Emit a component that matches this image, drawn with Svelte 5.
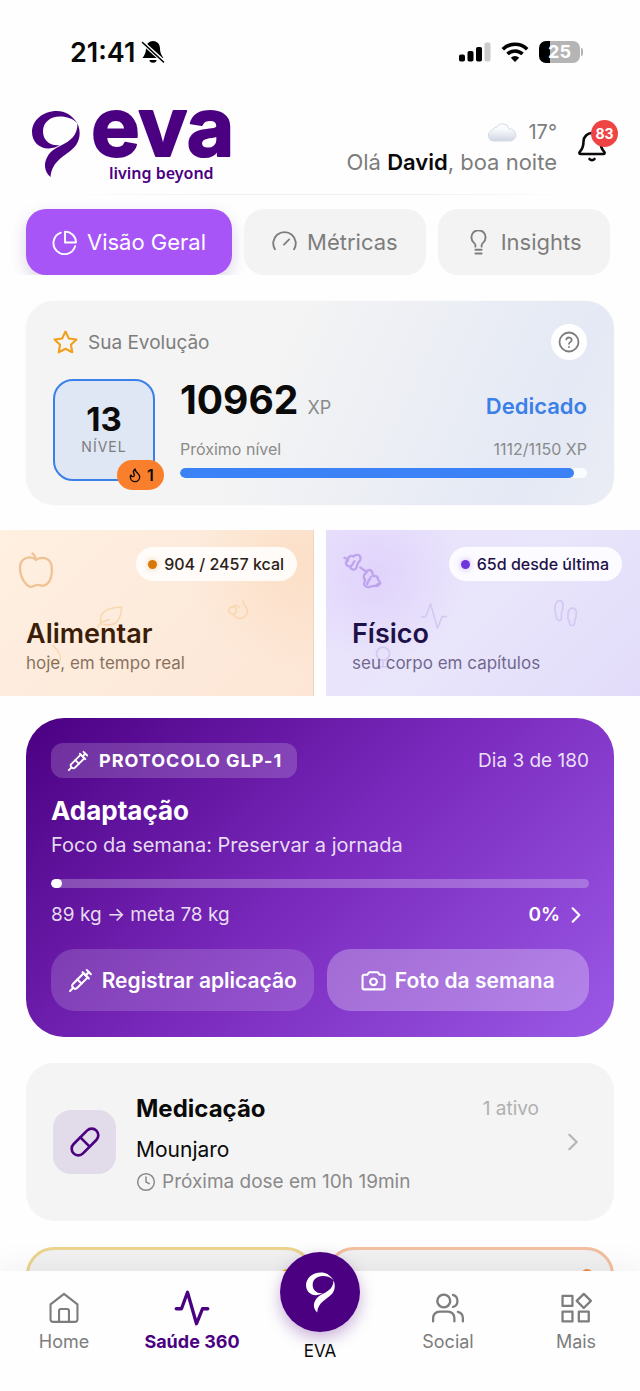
<script lang="ts">
  type Tab = { id: string; label: string; icon: string }

  const icons: Record<string, string[]> = {
    pie: ['M12.5 1.5v10.5H23A10.5 10.5 0 0 0 12.5 1.5z', 'M8.5 2.6A10.6 10.6 0 1 0 22.2 15.6'],
    gauge: ['M2.800 18.500a10.800 10.800 0 1 1 18.400 0', 'M11.5 14l5-5'],
    bulb: [
      'M9 16v-1.400c0-1-.6-1.700-1.500-2.500a6.800 6.800 0 1 1 9 0c-.9.800-1.500 1.500-1.500 2.500V16',
      'M9 19h6',
      'M9 22.500h6',
    ],
    star: [
      'M12 1.500l3.200 6.600 7.300 1-5.300 5.100 1.300 7.200L12 18l-6.500 3.400 1.300-7.200L1.500 9.100l7.300-1z',
    ],
    help: [
      'M12 2.500a9.500 9.500 0 1 0 0 19 9.500 9.500 0 0 0 0-19z',
      'M9.300 9.300a2.800 2.800 0 0 1 5.400.9c0 1.800-2.700 2-2.700 3.600',
      'M12 17h.01',
    ],
    flame: [
      'M8.500 14.500A2.500 2.500 0 0 0 11 12c0-1.380-.5-2-1-3-1.072-2.143-.224-4.054 2-6 .5 2.500 2 4.900 4 6.500 2 1.600 3 3.500 3 5.500a7 7 0 1 1-14 0c0-1.153.433-2.294 1-3a2.500 2.500 0 0 0 2.500 2.500z',
    ],
    apple: [
      'M12 6.200c-2-1.700-4.500-1.600-6.500-.6C3 7 2.500 10 3 13c.6 3.800 3 7.500 5.500 8.500 1.400.5 2.300-.7 3.700-.9 1.800-.3 3 .8 4.600.2 2.400-.9 3.900-3.700 4.200-7 .3-3.300.2-6.600-2.400-8-2-1-4.700-.9-6.600.4z',
      'M12 6c-.2-1.500-.8-2.600-2-3.500',
    ],
    dumbbell: [
      'M2 5l2 1M20.500 20.500l2-1M11 10.500l3.500 2.500',
      'M4 6.500c-.3-2 1.600-3.200 3.200-2.200 1.200-1.700 3.900-1 4 1 .1 1.400-1 2-1.600 2.900-.6 1.100-.3 2.300-1.300 3.200-1.300 1-3 .1-3-1.500C3 10 1.800 7.600 4 6.500z',
      'M5.500 10c1.200-.6 1.200-2 2.200-3',
      'M14.300 13.800c.1-1.900 2.500-2.400 3.400-.9.500.8.2 1.800.7 2.600 1.500-.6 3 .5 2.700 2 1.600.9 1.300 3.300-.5 3.600-1.100.2-1.900-.3-3 .2-1.600.8-3.900.6-4.300-1-.3-1.200.4-1.900.5-2.900-1.300-.8-1-3 .5-3.600z',
      'M15 20c.2-1.600 1.500-2.500 2-4',
    ],
    leaf: ['M3 20c1-3 3.500-4.500 9-6', 'M6 18C3 9 9 4.500 22 4c0 9-4 16-14 14'],
    cherry: ['M7 8a3.500 3.500 0 1 0 .1 0', 'M17 3c-.5 2 .500 3.500 2 5a7 6.500 0 1 1-11 8', 'M8 8c2-2 4-1 5 1'],
    drop: ['M10 2c5 5 8 9 8 13a6 6 0 0 1-12 0'],
    pulse: ['M1.500 12.500H5l4-11 6 21 4-10h3.500'],
    steps: [
      'M3.500 15C1 9 2.500 2 6 2s3.500 6 1.500 10.500V17c-1 1.500-4 1-4-2z',
      'M14 20c-2.500-5-1.500-12 2.500-12s3.500 6 1.500 11v2c-1 1.500-4 1.500-4-1z',
    ],
    ring: ['M12 3a6 6 0 1 0 .1 0', 'M12 15v6M8 21h8'],
    syringe: [
      'm18 2 4 4',
      'm17 7 3-3',
      'M19 9 8.700 19.300c-1 1-2.500 1-3.400 0l-.6-.6c-1-1-1-2.500 0-3.400L15 5z',
      'm9 11 4 4',
      'm5 19-3 3',
      'm14 4 6 6',
    ],
    camera: [
      'M8 4h8l2 2.500h3A1.500 1.500 0 0 1 22.500 8v11a1.500 1.500 0 0 1-1.500 1.500H3A1.500 1.500 0 0 1 1.500 19V8A1.500 1.500 0 0 1 3 6.500h3z',
      'M12 10a3.200 3.200 0 1 0 .01 0z',
    ],
    chevron: ['M8 4l8 8-8 8'],
    pill: [
      'm10.500 20.500 10-10a4.950 4.950 0 1 0-7-7l-10 10a4.950 4.950 0 1 0 7 7z',
      'm8.500 8.500 7 7',
    ],
    clock: ['M12 2a10 10 0 1 0 0 20 10 10 0 0 0 0-20z', 'M12 6v6l4 2'],
    home: [
      'M2.500 9.500 12 2l9.500 7.500V20a1.800 1.800 0 0 1-1.800 1.800H4.300A1.800 1.800 0 0 1 2.500 20z',
      'M8.500 21.500V14a1.300 1.300 0 0 1 1.300-1.300h4.400a1.300 1.300 0 0 1 1.300 1.300v7.500',
    ],
    users: [
      'M9 2.500a4.500 4.500 0 1 0 .01 0z',
      'M1.500 21.500V19a4.500 4.500 0 0 1 4.500-4.500h6a4.500 4.500 0 0 1 4.500 4.500v2.500',
      'M15.500 2.700a4.500 4.500 0 0 1 0 8.600',
      'M19 14.700a4.500 4.500 0 0 1 3.500 4.300v2.500',
    ],
    grid: ['M2.500 3.500h7v7h-7z', 'M2.500 14.500h7v7h-7z', 'M14 14.500h7v7h-7z', 'M17.500 2l5 5-5 5-5-5z'],
  }

  const tabs: Tab[] = [
    { id: 'geral', label: 'Visão Geral', icon: 'pie' },
    { id: 'metricas', label: 'Métricas', icon: 'gauge' },
    { id: 'insights', label: 'Insights', icon: 'bulb' },
  ]

  const xp = { total: 10962, current: 1112, next: 1150 }

  let active = $state('geral')
</script>

{#snippet icon(name: string, size: number, width = 2)}
  <svg
    viewBox="0 0 24 24"
    width={size}
    height={size}
    fill="none"
    stroke="currentColor"
    stroke-width={width}
    stroke-linecap="round"
    stroke-linejoin="round"
    aria-hidden="true"
  >
    {#each icons[name] as d}
      <path {d} />
    {/each}
  </svg>
{/snippet}

{#snippet ribbon()}
  <path
    d="M45.500 13.500C40 5 33 1 25 1 10 1 0 11 0 22c0 10 8 17 17 16.500 4-.3 8-1.500 11-3.500-10 1.500-17-5-17-13.500C11 12.500 18 6.500 28 6.500c7 0 13 2 17.500 7z"
  />
  <path
    d="M45.500 13.500C49 21 48.500 31 42 37.500 34 46 20 50 18.500 67 12.500 62 11.500 54 15 47.500 18 41 24 38 29 35.500 38 31 45.500 26 45.500 13.500z"
  />
{/snippet}

<div class="app">
  <div class="status">
    <div class="clock">
      <span>21:41</span>
      <svg viewBox="0 0 24 24" width="24" height="24" aria-hidden="true">
        <path d="M12 1a7 7 0 0 0-7 7c0 5-1.500 7-3.500 10h21c-2-3-3.500-5-3.500-10a7 7 0 0 0-7-7zM8.500 20a3.500 2.800 0 0 0 7 0z" />
        <path d="M1.500 2.500l21 19" stroke="#fefefe" stroke-width="4" />
        <path d="M1.500 2.500l21 19.500" stroke="#000" stroke-width="1.600" stroke-linecap="round" />
      </svg>
    </div>
    <div class="signals">
      <svg viewBox="0 0 32 20" width="32" height="20" aria-hidden="true">
        <rect x="0" y="12.500" width="6" height="7" rx="1.800" />
        <rect x="8.500" y="9" width="6" height="10.500" rx="1.800" />
        <rect x="17" y="5" width="6" height="14.500" rx="1.800" />
        <rect x="25.500" y="0.500" width="6" height="19" rx="1.800" fill="#ccc" />
      </svg>
      <svg viewBox="0 0 28 20" width="28" height="20" fill="none" stroke="#000" stroke-width="3.600" aria-hidden="true">
        <path d="M1.800 7.200a17.500 17.500 0 0 1 24.400 0" />
        <path d="M6.500 12a10.800 10.800 0 0 1 15 0" />
        <path d="M14 20l-4.200-4.300a6 6 0 0 1 8.400 0z" fill="#000" stroke="none" />
      </svg>
      <div class="battery"><span>25</span></div>
    </div>
  </div>

  <header>
    <svg class="logo" viewBox="0 0 206 74" width="206" height="74" role="img" aria-label="eva living beyond">
      <g fill="#4b0082">{@render ribbon()}</g>
      <text class="brand" x="59" y="46">eva</text>
      <text class="tagline" x="77" y="69">living beyond</text>
    </svg>
    <div class="greeting">
      <div class="weather">
        <svg viewBox="0 0 30 20" width="30" height="20" aria-hidden="true">
          <defs>
            <linearGradient id="cloud" x1="0" y1="0" x2="0" y2="1">
              <stop offset="0.300" stop-color="#fafbfd" />
              <stop offset="1" stop-color="#cfd6e2" />
            </linearGradient>
          </defs>
          <path
            d="M7 19a5.500 5.500 0 0 1-1.500-10.800A5 5 0 0 1 10 5a6.500 6.500 0 0 1 12 2 6 6 0 0 1 1.500 12z"
            fill="url(#cloud)"
            stroke="#d5dbe5"
          />
        </svg>
        17°
      </div>
      <div>Olá <strong>David</strong>, boa noite</div>
    </div>
    <button type="button" class="bell" aria-label="Notificações">
      <svg viewBox="0 0 28 32" width="28" height="32" fill="none" stroke="#0a0a0a" stroke-width="2.600" stroke-linecap="round" stroke-linejoin="round" aria-hidden="true">
        <path d="M14 2a8.500 8.500 0 0 0-8.500 8.500c0 5-1 7.500-3.700 10.300-.8.900-.4 2.200.9 2.200h22.600c1.300 0 1.700-1.300.9-2.200-2.700-2.800-3.700-5.300-3.700-10.300A8.500 8.500 0 0 0 14 2z" />
        <path d="M11.500 28a3 2.500 0 0 0 5 0" />
      </svg>
      <span class="count">83</span>
    </button>
  </header>

  <main>
    <div class="tabs">
      {#each tabs as tab}
        <button type="button" class:active={active === tab.id} onclick={() => (active = tab.id)}>
          {@render icon(tab.icon, 25, 1.8)}
          {tab.label}
        </button>
      {/each}
    </div>

    <section class="card evolution">
      <div class="row">
        <span class="heading"><i>{@render icon('star', 25)}</i>Sua Evolução</span>
        <button type="button" class="help" aria-label="Ajuda">{@render icon('help', 24, 1.8)}</button>
      </div>
      <div class="progress">
        <div class="level">
          <strong>13</strong>
          <span>NÍVEL</span>
          <div class="streak">{@render icon('flame', 16)}1</div>
        </div>
        <div class="xp">
          <div class="row total">
            <span><strong>{xp.total}</strong> XP</span>
            <em>Dedicado</em>
          </div>
          <div class="row small">
            <span>Próximo nível</span>
            <span>{xp.current}/{xp.next} XP</span>
          </div>
          <div class="bar"><div style="width: {(xp.current / xp.next) * 100}%"></div></div>
        </div>
      </div>
    </section>

    <div class="tiles">
      <a href="#alimentar" class="tile food">
        <i class="deco d1">{@render icon('leaf', 30, 1.3)}</i>
        <i class="deco d2">{@render icon('cherry', 26, 1.5)}</i>
        <i class="deco d3">{@render icon('drop', 22, 1.5)}</i>
        <div class="tile-top">
          {@render icon('apple', 42, 1.3)}
          <span class="pill">904 / 2457 kcal</span>
        </div>
        <h2>Alimentar</h2>
        <p>hoje, em tempo real</p>
      </a>
      <a href="#fisico" class="tile body">
        <i class="deco d1">{@render icon('pulse', 28, 1.4)}</i>
        <i class="deco d2">{@render icon('steps', 30, 1.4)}</i>
        <i class="deco d3">{@render icon('ring', 26, 1.5)}</i>
        <div class="tile-top">
          {@render icon('dumbbell', 42, 1.3)}
          <span class="pill">65d desde última</span>
        </div>
        <h2>Físico</h2>
        <p>seu corpo em capítulos</p>
      </a>
    </div>

    <section class="protocol">
      <div class="row">
        <span class="badge">{@render icon('syringe', 22)}PROTOCOLO GLP-1</span>
        <span>Dia 3 de 180</span>
      </div>
      <h2>Adaptação</h2>
      <p>Foco da semana: Preservar a jornada</p>
      <div class="bar"><div></div></div>
      <div class="row goal">
        <span>89 kg → meta 78 kg</span>
        <span class="percent">0% {@render icon('chevron', 20, 2.6)}</span>
      </div>
      <div class="actions">
        <button type="button">{@render icon('syringe', 25)}Registrar aplicação</button>
        <button type="button" class="light">{@render icon('camera', 25)}Foto da semana</button>
      </div>
    </section>

    <a href="#medicacao" class="card medication">
      <span class="pill-box">{@render icon('pill', 32)}</span>
      <div class="info">
        <div class="row">
          <h2>Medicação</h2>
          <span class="count-active">1 ativo</span>
        </div>
        <div class="drug">Mounjaro</div>
        <div class="dose">{@render icon('clock', 20, 1.8)}Próxima dose em 10h 19min</div>
      </div>
      <span class="go">{@render icon('chevron', 22, 2.4)}</span>
    </a>

    <div class="next">
      <div class="peek yellow"><span></span></div>
      <div class="peek orange"><span></span></div>
    </div>
  </main>

  <nav>
    <a href="#home">{@render icon('home', 34, 1.5)}Home</a>
    <a href="#saude" class="current">{@render icon('pulse', 36, 2.2)}Saúde 360</a>
    <a href="#eva" class="eva">
      <span class="orb">
        <svg viewBox="0 0 48 68" width="29" height="41" fill="#fff" aria-hidden="true">{@render ribbon()}</svg>
      </span>
      EVA
    </a>
    <a href="#social">{@render icon('users', 34, 1.6)}Social</a>
    <a href="#mais">{@render icon('grid', 34, 1.6)}Mais</a>
  </nav>
</div>

<style>
  :global(body) {
    background: #fefefe;
  }

  .app {
    display: flex;
    flex-direction: column;
    height: 100vh;
    overflow: hidden;
    font-family: Inter, 'Liberation Sans', sans-serif;
    color: #0a0a0a;
  }

  .app :global(*) {
    box-sizing: border-box;
  }

  svg {
    display: block;
    flex: none;
  }

  i,
  em {
    font-style: normal;
  }

  h2,
  p {
    margin: 0;
  }

  a {
    color: inherit;
    text-decoration: none;
  }

  button {
    border: 0;
    font-family: inherit;
    cursor: pointer;
  }

  .row {
    display: flex;
    align-items: center;
    justify-content: space-between;
  }

  .status {
    display: flex;
    justify-content: space-between;
    height: 104px;
    padding: 0 60px 0 70px;
    align-items: center;
    flex: none;
  }

  .clock {
    display: flex;
    align-items: center;
    gap: 6px;
    font-size: 27px;
    font-weight: 600;
  }

  .signals {
    display: flex;
    align-items: center;
    gap: 10px;
  }

  .battery {
    position: relative;
    width: 41px;
    height: 22px;
    border-radius: 7px;
    background: linear-gradient(90deg, #000 26%, #b5b5b5 26%);
    color: #fff;
    font-size: 18px;
    line-height: 22px;
    font-weight: 700;
    text-align: center;
  }

  .battery::after {
    content: '';
    position: absolute;
    left: 42px;
    top: 7px;
    width: 2px;
    height: 8px;
    border-radius: 0 2px 2px 0;
    background: #b5b5b5;
  }

  header {
    position: relative;
    display: flex;
    align-items: center;
    height: 91px;
    padding: 0 22px 6px 32px;
    flex: none;
  }

  header::after {
    content: '';
    position: absolute;
    left: 10%;
    right: 10%;
    bottom: 0;
    height: 1px;
    background: linear-gradient(90deg, transparent, #f0f0f0 30%, #f0f0f0 70%, transparent);
  }

  .brand {
    font-weight: 700;
    font-size: 82px;
    fill: #4b0082;
    stroke: #4b0082;
    stroke-width: 2px;
    stroke-linejoin: round;
  }

  .tagline {
    font-family: 'Noto Sans', 'Open Sans', sans-serif;
    font-weight: 600;
    font-size: 16px;
    fill: #4b0082;
  }

  .logo {
    overflow: visible;
  }

  .greeting {
    margin-left: auto;
    color: #7d7d7d;
    font-size: 22px;
    line-height: 30px;
    text-align: right;
  }

  .greeting strong {
    color: #0a0a0a;
    font-weight: 600;
  }

  .weather {
    display: flex;
    align-items: center;
    justify-content: flex-end;
    gap: 11px;
    font-size: 20px;
  }

  .bell {
    position: relative;
    margin-left: 21px;
    padding: 0;
    width: 40px;
    height: 32px;
    background: none;
  }

  .count {
    position: absolute;
    top: -11px;
    right: 0;
    width: 27px;
    height: 27px;
    border-radius: 50%;
    background: #ef4444;
    color: #fff;
    font-size: 14px;
    line-height: 27px;
    font-weight: 700;
  }

  main {
    flex: 1;
    min-height: 0;
    overflow-y: auto;
    scrollbar-width: none;
  }

  .tabs {
    display: flex;
    gap: 12px;
    padding: 14px 26px 0;
    overflow: hidden;
  }

  .tabs button {
    display: flex;
    align-items: center;
    justify-content: center;
    gap: 10px;
    height: 66px;
    padding: 0 28px;
    border-radius: 20px;
    background: #f3f3f3;
    color: #7d7d7d;
    font-size: 22px;
    white-space: nowrap;
  }

  .tabs .active {
    padding: 0 26px;
    background: #a855f7;
    color: #fff;
    box-shadow: 0 6px 16px rgba(80, 40, 140, 0.2);
  }

  .card {
    margin: 26px 26px 0;
    border-radius: 28px;
    background: #f4f4f4;
  }

  .evolution {
    padding: 23px 27px 24px;
    background: linear-gradient(115deg, #f4f4f4 40%, #e4e9f5 85%, #ebedf4);
    box-shadow: 0 0 2px rgba(0, 0, 0, 0.06);
  }

  .heading {
    display: flex;
    align-items: center;
    gap: 10px;
    color: #7d7d7d;
    font-size: 19px;
  }

  .heading i {
    color: #f0a01e;
  }

  .help {
    display: grid;
    place-items: center;
    width: 36px;
    height: 36px;
    padding: 0;
    border-radius: 50%;
    background: #fff;
    color: #7d7d7d;
  }

  .progress {
    display: flex;
    gap: 25px;
    margin-top: 19px;
  }

  .level {
    position: relative;
    display: flex;
    flex-direction: column;
    align-items: center;
    justify-content: center;
    width: 102px;
    height: 102px;
    padding-bottom: 3px;
    border: 2px solid #3b7fe8;
    border-radius: 20px;
    background: #dfe7f5;
    flex: none;
  }

  .level strong {
    font-size: 33px;
    line-height: 36px;
  }

  .level span {
    color: #7d7d7d;
    font-size: 14px;
    line-height: 20px;
    letter-spacing: 1px;
  }

  .streak {
    position: absolute;
    right: -11px;
    bottom: -11px;
    display: flex;
    align-items: center;
    justify-content: center;
    gap: 4px;
    width: 47px;
    height: 30px;
    border-radius: 15px;
    background: #f97f2c;
    font-size: 16px;
    font-weight: 600;
  }

  .xp {
    flex: 1;
  }

  .total {
    height: 54px;
    color: #8a8a8a;
    font-size: 18px;
    align-items: flex-start;
  }

  .total strong {
    color: #0a0a0a;
    font-size: 39px;
    line-height: 42px;
    margin-right: 4px;
  }

  .total em {
    color: #3b7fe8;
    font-size: 22px;
    line-height: 54px;
    font-weight: 600;
  }

  .small {
    padding-top: 3px;
    color: #8a8a8a;
    font-size: 16px;
    line-height: 26px;
  }

  .bar {
    height: 10px;
    border-radius: 5px;
    background: #fafbfd;
    overflow: hidden;
  }

  .xp .bar {
    margin-top: 6px;
  }

  .xp .bar div {
    height: 100%;
    border-radius: 5px;
    background: #3b82f6;
  }

  .tiles {
    display: grid;
    grid-template-columns: 1fr 1fr;
    gap: 12px;
    margin-top: 25px;
  }

  .tile {
    position: relative;
    height: 166px;
    padding: 17px 18px 0 26px;
  }

  .food {
    padding-right: 16px;
    border-right: 1px solid #ecd6c2;
    background:
      radial-gradient(circle at 95% 20%, rgba(250, 208, 170, 0.4), transparent 34%),
      linear-gradient(135deg, #fff0e1, #fdebdc 50%, #fde6d6);
    color: #3b1d08;
  }

  .body {
    background:
      radial-gradient(circle at 16% 28%, rgba(215, 195, 252, 0.5), transparent 30%),
      linear-gradient(135deg, #e9e2fc, #e9e5fb 50%, #e2dcfa);
    color: #1e1147;
  }

  .tile-top {
    display: flex;
    justify-content: space-between;
    height: 69px;
    margin-left: -11px;
  }

  .tile-top > :global(svg) {
    margin-top: 2px;
  }

  .food .tile-top > :global(svg) {
    color: #efc294;
  }

  .body .tile-top > :global(svg) {
    color: #bea3ee;
  }

  .pill {
    display: flex;
    align-items: center;
    gap: 7px;
    height: 34px;
    padding: 0 13px 0 12px;
    border-radius: 17px;
    background: rgba(255, 255, 255, 0.85);
    color: #2b2118;
    font-size: 16px;
    font-weight: 500;
    white-space: nowrap;
  }

  .pill::before {
    content: '';
    width: 9px;
    height: 9px;
    border-radius: 50%;
    background: #d97706;
    box-shadow: 0 0 6px rgba(217, 119, 6, 0.4);
  }

  .body .pill {
    color: #1e1147;
  }

  .body .pill::before {
    background: #6d35dc;
    box-shadow: 0 0 6px rgba(109, 53, 220, 0.4);
  }

  .tile h2 {
    position: relative;
    font-size: 27px;
    line-height: 36px;
    font-weight: 600;
  }

  .tile p {
    position: relative;
    font-size: 17px;
    line-height: 22px;
    opacity: 0.6;
  }

  .deco {
    position: absolute;
    color: #f8d8ae;
  }

  .body .deco {
    color: #d3c9f2;
  }

  .d1 {
    left: 30%;
    top: 72px;
  }

  .d2 {
    left: 72%;
    top: 68px;
  }

  .d3 {
    left: 14%;
    top: 114px;
  }

  .protocol {
    margin: 22px 26px 0;
    padding: 25px 25px 26px;
    border-radius: 38px;
    background: linear-gradient(135deg, #4b0082, #7a2abd 50%, #9b59e6);
    color: rgba(255, 255, 255, 0.85);
    font-size: 19px;
  }

  .badge {
    display: flex;
    align-items: center;
    gap: 10px;
    height: 35px;
    padding: 0 15px 0 16px;
    border-radius: 12px;
    background: rgba(255, 255, 255, 0.18);
    color: #fff;
    font-size: 18px;
    font-weight: 700;
    letter-spacing: 1px;
  }

  .protocol h2 {
    margin-top: 15px;
    color: #fff;
    font-size: 26px;
    line-height: 36px;
  }

  .protocol p {
    font-size: 20px;
    line-height: 32px;
  }

  .protocol .bar {
    height: 9px;
    margin-top: 18px;
    background: rgba(255, 255, 255, 0.25);
  }

  .protocol .bar div {
    width: 11px;
    height: 100%;
    border-radius: 5px;
    background: #fff;
  }

  .goal {
    margin-top: 13px;
    line-height: 28px;
  }

  .percent {
    display: flex;
    align-items: center;
    gap: 6px;
    padding-right: 3px;
    color: #fff;
    font-weight: 600;
  }

  .actions {
    display: grid;
    grid-template-columns: 1fr 1fr;
    gap: 13px;
    margin-top: 20px;
  }

  .actions button {
    display: flex;
    align-items: center;
    justify-content: center;
    gap: 9px;
    height: 62px;
    padding: 0;
    border-radius: 24px;
    background: rgba(255, 255, 255, 0.16);
    color: #fff;
    font-size: 21px;
    font-weight: 600;
    white-space: nowrap;
  }

  .actions .light {
    background: rgba(255, 255, 255, 0.28);
  }

  .medication {
    display: flex;
    align-items: center;
    gap: 20px;
    height: 158px;
    padding: 0 30px 0 27px;
  }

  .pill-box {
    display: grid;
    place-items: center;
    width: 63px;
    height: 64px;
    border-radius: 18px;
    background: #e2dbe9;
    color: #4b0082;
  }

  .info {
    flex: 1;
    padding-top: 4px;
  }

  .info h2 {
    font-size: 24px;
    line-height: 36px;
    font-weight: 700;
  }

  .count-active {
    color: #b0b0b0;
    font-size: 19px;
  }

  .drug {
    margin-top: 7px;
    font-size: 21px;
    line-height: 32px;
  }

  .dose {
    display: flex;
    align-items: center;
    gap: 6px;
    color: #8a8a8a;
    font-size: 19px;
    line-height: 32px;
  }

  .go {
    margin-left: 3px;
    color: #b5b5b5;
  }

  .next {
    display: grid;
    grid-template-columns: 1fr 1fr;
    gap: 12px;
    padding: 26px 26px 0;
  }

  .peek {
    display: flex;
    justify-content: flex-end;
    height: 140px;
    padding: 19px 18px;
    border: 3px solid #ecd48f;
    border-radius: 28px;
    background: #f1f1f1;
  }

  .peek span {
    width: 12px;
    height: 12px;
    border-radius: 50%;
    background: #eab308;
  }

  .orange {
    border-color: #f3bfa0;
  }

  .orange span {
    background: #ee8a4a;
  }

  nav {
    position: relative;
    display: grid;
    grid-template-columns: repeat(5, 1fr);
    height: 120px;
    flex: none;
    background: #fefefe;
    box-shadow: 0 -4px 30px rgba(0, 0, 0, 0.06);
  }

  nav a {
    display: grid;
    grid-template-rows: 34px 26px;
    row-gap: 4px;
    align-content: start;
    align-items: center;
    justify-items: center;
    padding-top: 20px;
    color: #7d7d7d;
    font-size: 18px;
    line-height: 26px;
    white-space: nowrap;
  }

  nav .current {
    color: #4b0082;
    font-weight: 700;
  }

  nav .eva {
    grid-template-rows: 80px 26px;
    row-gap: 6px;
    margin-top: -19px;
    padding-top: 0;
    color: #0a0a0a;
    font-size: 17px;
  }

  .orb {
    display: grid;
    place-items: center;
    width: 80px;
    height: 80px;
    border-radius: 50%;
    background: #4b0082;
    box-shadow: 0 6px 16px rgba(75, 0, 130, 0.3);
  }
</style>
